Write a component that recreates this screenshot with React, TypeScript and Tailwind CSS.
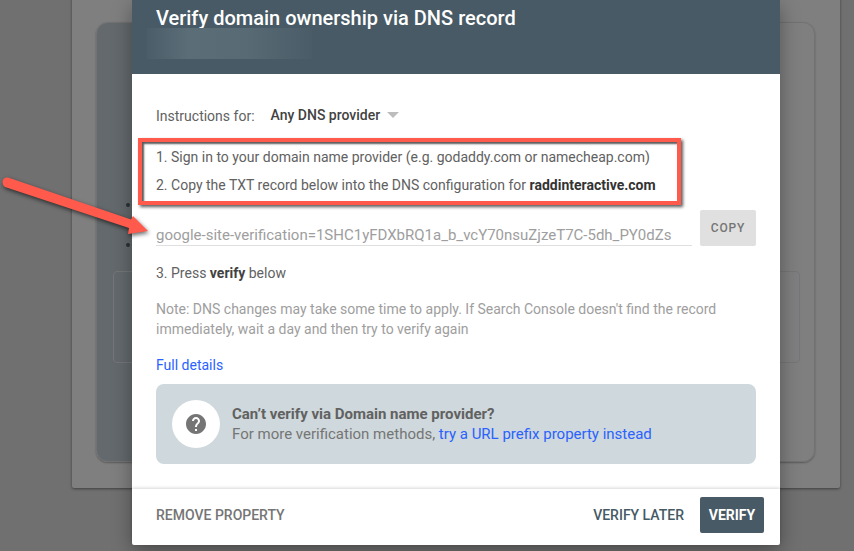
import { MdHelp } from "react-icons/md";

export default function App() {
  return (
    <div className="relative h-[551px] w-[854px] overflow-hidden bg-[#707070] font-['Roboto',sans-serif] text-sm text-[#616161]">
      {/* Dimmed page behind the dialog */}
      <div className="absolute left-[72px] top-[-20px] h-[508px] w-[768px] rounded-[2px] bg-[#7f7f7f] px-6 pt-[42px] shadow-[0_1px_3px_rgba(0,0,0,0.45)]">
        <div className="relative h-[440px] w-[719px] rounded-xl border border-[#727272] bg-[linear-gradient(90deg,#63696c_50%,#7f7f7f_50%)] shadow-[0_1px_2px_rgba(0,0,0,0.3)]">
          <span className="absolute left-[29px] top-[180px] h-1 w-1 rounded-full bg-[#2b3135]" />
          <span className="absolute left-[29px] top-[220px] h-1 w-1 rounded-full bg-[#2b3135]" />
          <div className="absolute left-[16px] top-[248px] h-[92px] w-[687px] rounded-[4px] border border-[#747678]" />
        </div>
      </div>

      {/* Dialog */}
      <div className="absolute left-[132px] top-0 flex h-[545px] w-[648px] flex-col rounded-b-[2px] bg-white shadow-[0_6px_20px_rgba(0,0,0,0.35)]">
        <header className="relative h-[74px] shrink-0 bg-[#485a65] pl-6 pt-[5px]">
          <h1 className="text-[20px] font-medium leading-[26px] text-white">Verify domain ownership via DNS record</h1>
          <div className="absolute left-[15px] top-[28px] h-[31px] w-[165px] bg-[linear-gradient(90deg,#4b5d68_0%,#5b6d77_25%,#586a74_60%,#4a5c67_100%)]" />
        </header>

        <div className="flex flex-1 flex-col px-6">
          <div className="mt-[31px] flex h-5 items-center">
            <span className="mt-[2px]">Instructions for:</span>
            <span className="ml-4 font-medium text-[#424242]">Any DNS provider</span>
            <span className="ml-[7px] h-0 w-0 border-x-[6px] border-t-[6px] border-x-transparent border-t-[#bdbdbd]" />
          </div>
          <p className="mt-[22px] h-5 leading-5">1. Sign in to your domain name provider (e.g. godaddy.com or namecheap.com)</p>
          <p className="mt-2 h-5 leading-5">
            2. Copy the TXT record below into the DNS configuration for <strong className="font-bold text-[#333]">raddinteractive.com</strong>
          </p>

          <div className="mt-[15px] flex items-end gap-2">
            <div className="h-[25px] w-[536px] border-b border-[#e0e0e0] text-[15px] leading-[28px] text-[#9e9e9e]">
              google-site-verification=1SHC1yFDXbRQ1a_b_vcY70nsuZjzeT7C-5dh_PY0dZs
            </div>
            <button className="h-9 w-14 rounded-[2px] bg-[#e0e0e0] text-xs font-medium tracking-[0.8px] text-[#757575]">COPY</button>
          </div>

          <p className="mt-[17px] h-5 leading-5">
            3. Press <strong className="font-bold text-[#424242]">verify</strong> below
          </p>
          <p className="mt-[16px] leading-5 text-[#9e9e9e]">
            Note: DNS changes may take some time to apply. If Search Console doesn't find the record
            <br />
            immediately, wait a day and then try to verify again
          </p>
          <a className="mt-[16px] h-5 leading-5 text-[#2962ff]">Full details</a>

          <div className="mt-[9px] flex h-20 items-center gap-3 rounded-lg bg-[#cfd8dc] px-4">
            <div className="flex h-12 w-12 items-center justify-center rounded-full bg-white">
              <MdHelp className="text-[#757575]" size={24} />
            </div>
            <div className="text-[15px] leading-5">
              <div className="font-bold text-[#616161]">Can’t verify via Domain name provider?</div>
              <div className="text-[#757575]">
                For more verification methods, <a className="text-[#2962ff]">try a URL prefix property instead</a>
              </div>
            </div>
          </div>
        </div>

        <footer className="flex h-14 shrink-0 items-center justify-between pb-1 pl-6 pr-4 shadow-[0_-1px_3px_rgba(0,0,0,0.16)]">
          <span className="font-medium text-[#757575]">REMOVE PROPERTY</span>
          <div className="flex items-center gap-4">
            <span className="font-medium text-[#455a64]">VERIFY LATER</span>
            <button className="h-9 w-16 rounded-[2px] bg-[#485a65] font-bold text-white">VERIFY</button>
          </div>
        </footer>
      </div>

      {/* Annotations */}
      <div className="absolute left-[138px] top-[138px] h-[67px] w-[543px] border-[4px] border-[#ff5a4c] shadow-[2px_2px_3px_rgba(0,0,0,0.65),inset_2px_2px_2px_rgba(0,0,0,0.65)]" />
      <svg className="absolute left-0 top-0 drop-shadow-[1px_2px_2px_rgba(0,0,0,0.6)]" width="160" height="245" viewBox="0 0 160 245">
        <path
          d="M5 187 L129 228 L128 234 L148 231 L133 216 L131 219.5 L8 177.5 Q3.5 177 2.5 181.5 Q2.5 185.5 5 187 Z"
          fill="#ff5a4c"
        />
      </svg>
    </div>
  );
}
